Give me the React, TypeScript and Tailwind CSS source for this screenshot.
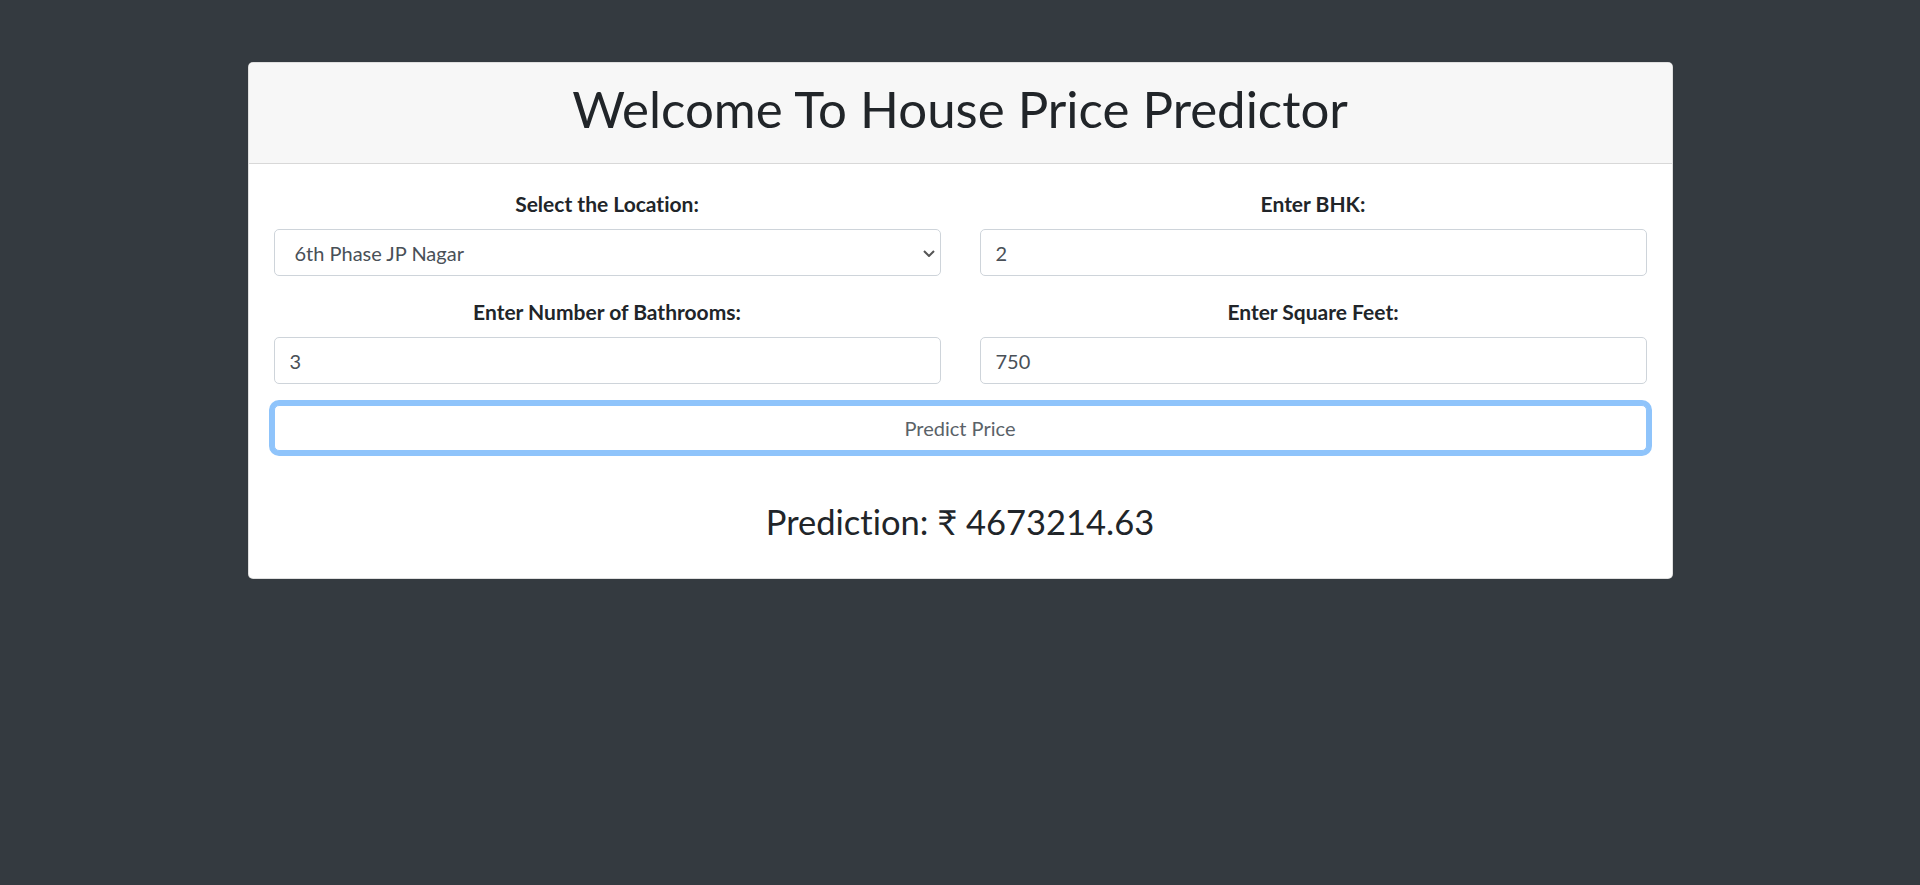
import React from "react";

const font = { fontFamily: 'Lato, "Noto Sans", sans-serif' };

const Field = ({ label, children }: { label: string; children: React.ReactNode }) => (
  <div className="mb-[21px]">
    <label className="block text-center text-[21px] font-bold leading-[30px] mb-[10px] text-[#212529]">{label}</label>
    {children}
  </div>
);

const inputCls =
  "w-full h-[47px] px-[15px] text-[20px] text-[#495057] bg-white border border-[#ced4da] rounded-[5px] outline-none";

const App = () => {
  return (
    <div className="min-h-screen bg-[#343a40] pt-[62px] [font-variant-ligatures:none]" style={font}>
      <div className="w-[1425px] mx-auto bg-white border border-[rgba(0,0,0,0.125)] rounded-[5px] overflow-hidden">
        <div className="bg-[#f7f7f7] border-b border-[rgba(0,0,0,0.125)] pt-[11px] pb-[19px] px-[25px]">
          <h1 className="text-center text-[51px] leading-[70px] font-normal text-[#212529]">
            Welcome To House Price Predictor
          </h1>
        </div>
        <div className="px-[25px] pt-[25px] pb-[34px]">
          <div className="grid grid-cols-2 gap-x-[39px]">
            <Field label="Select the Location:">
              <div className="relative">
                <select className={inputCls + " appearance-none pl-[20px]"} defaultValue="6th Phase JP Nagar">
                  <option>6th Phase JP Nagar</option>
                </select>
                <svg className="absolute right-[6px] top-[21px] pointer-events-none" width="12" height="7" viewBox="0 0 12 7" fill="none">
                  <path d="M1 1l5 5 5-5" stroke="#555" strokeWidth="2" />
                </svg>
              </div>
            </Field>
            <Field label="Enter BHK:">
              <input className={inputCls} defaultValue="2" />
            </Field>
            <Field label="Enter Number of Bathrooms:">
              <input className={inputCls} defaultValue="3" />
            </Field>
            <Field label="Enter Square Feet:">
              <input className={inputCls} defaultValue="750" />
            </Field>
          </div>
          <button className="block w-full h-[46px] text-[20px] text-[#5a6268] bg-white border border-[#8fc4fb] rounded-[5px] shadow-[0_0_0_5px_#8fc4fb]">
            Predict Price
          </button>
          <div className="mt-[49px] text-center">
            <h3 className="text-[34.5px] leading-[44px] font-normal text-[#212529]">Prediction: ₹ 4673214.63</h3>
          </div>
        </div>
      </div>
    </div>
  );
};

export default App;
